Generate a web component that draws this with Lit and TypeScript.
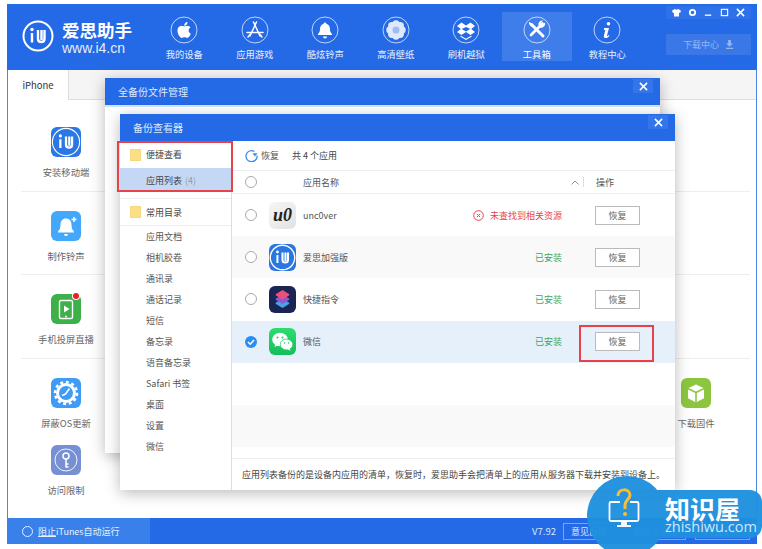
import { LitElement, html, css } from "lit";
import { customElement } from "lit/decorators.js";

const navIcons: Record<string, unknown> = {
  apple: html`<svg viewBox="0 0 28 28"><circle class="ring" cx="14" cy="14" r="13"/><path fill="#fff" transform="translate(3.6 3.4) scale(.88)" d="M17.05 20.28c-.98.95-2.05.8-3.08.35-1.09-.46-2.09-.48-3.24 0-1.44.62-2.2.44-3.06-.35C2.79 15.25 3.51 7.59 9.05 7.31c1.35.07 2.29.74 3.08.8 1.18-.24 2.31-.93 3.57-.84 1.51.12 2.65.72 3.4 1.8-3.12 1.87-2.38 5.98.48 7.13-.57 1.5-1.31 2.99-2.54 4.09zM12.03 7.25c-.15-2.23 1.66-4.07 3.74-4.25.29 2.58-2.34 4.5-3.74 4.25z"/></svg>`,
  store: html`<svg viewBox="0 0 28 28"><circle class="ring" cx="14" cy="14" r="13"/><path d="M15.5 6 9 20M12.5 6 19 20M6 16.5h16M7 21l2-2.500M21 21l-2-2.500" fill="none" stroke="#fff" stroke-width="1.500" stroke-linecap="round"/></svg>`,
  bell: html`<svg viewBox="0 0 28 28"><circle class="ring" cx="14" cy="14" r="13"/><path fill="#fff" d="M14 6.500a1.300 1.300 0 0 1 1.300 1.300c2.500.7 3.700 2.800 3.700 5.200 0 2.500.8 3.700 2 5v1H7v-1c1.200-1.300 2-2.500 2-5 0-2.400 1.200-4.500 3.700-5.200A1.300 1.300 0 0 1 14 6.500zM12 20.500h4a2 2 0 0 1-4 0z"/></svg>`,
  flower: html`<svg viewBox="0 0 28 28"><circle class="ring" cx="14" cy="14" r="13"/><g fill="#dfe9fb"><circle cx="14" cy="8" r="3.700"/><circle cx="14" cy="20" r="3.700"/><circle cx="8" cy="14" r="3.700"/><circle cx="20" cy="14" r="3.700"/><circle cx="9.800" cy="9.800" r="3.700"/><circle cx="18.200" cy="9.800" r="3.700"/><circle cx="9.800" cy="18.200" r="3.700"/><circle cx="18.200" cy="18.200" r="3.700"/></g><circle cx="14" cy="14" r="3.500" fill="#9dbdf3"/></svg>`,
  box: html`<svg viewBox="0 0 28 28"><circle class="ring" cx="14" cy="14" r="13"/><path fill="#fff" d="M9.500 6.500 14 9.500l4.500-3L23 10l-3.800 3 3.800 3-4.500 3-4.500-3-4.500 3L5 16l3.800-3L5 10zM14 11l-4.300 2 4.300 2.500 4.300-2.500zM8.500 19.500l5.500 3.200 5.500-3.200v1.300L14 24l-5.500-3.200z"/></svg>`,
  tools: html`<svg viewBox="0 0 28 28"><circle class="ring" cx="14" cy="14" r="13"/><path d="M8.500 8.500 20 20" stroke="#fff" stroke-width="3" stroke-linecap="round"/><path d="M19.500 7.500 8 19" stroke="#fff" stroke-width="2.600" stroke-linecap="round"/><path fill="#fff" d="M22 6.500a4 4 0 0 1-5 5l-1.500-2a4 4 0 0 1 4.500-5l-2 2.300 1.500 1.500zM6 6l3.500 1.500.5 2.500-2 .5L6 8z"/></svg>`,
  info: html`<svg viewBox="0 0 28 28"><circle class="ring" cx="14" cy="14" r="13"/><circle cx="15.500" cy="7.800" r="1.800" fill="#fff"/><path fill="#fff" d="M11 12h5l-2 7.500c-.2.800.5 1 1.800-.4l.7.600c-1.400 1.800-2.800 2.500-4.200 2.300-1.400-.2-1.700-1.100-1.400-2.300l1.500-5.700H11z"/></svg>`,
};

const nav = [
  ["我的设备", "apple"],
  ["应用游戏", "store"],
  ["酷炫铃声", "bell"],
  ["高清壁纸", "flower"],
  ["刷机越狱", "box"],
  ["工具箱", "tools"],
  ["教程中心", "info"],
];

const logoMark = (c: string, sw = 2) => html`<svg viewBox="0 0 32 32"><circle cx="16" cy="16" r="14.500" fill="none" stroke=${c} stroke-width=${sw}/><path d="M10 13v9.500M16 10v9c0 4 6.500 4 6.500 0v-9M19.500 10v10" fill="none" stroke=${c} stroke-width="2.400"/><circle cx="10" cy="9.500" r="1.700" fill=${c}/></svg>`;

const toolIcons: Record<string, unknown> = {
  i4: html`<div class="ti" style="background:#2b78e4">${logoMark("#fff", 1.2)}</div>`,
  bell: html`<div class="ti" style="background:#43a7fb"><svg viewBox="0 0 30 30"><path fill="#fff" d="M15 7.500c3.600 0 5.500 2.700 5.500 6 0 4 1 5.500 2.500 7v1H7v-1c1.500-1.500 2.500-3 2.500-7 0-3.300 1.900-6 5.500-6zM13 23h4a2 2 0 0 1-4 0z"/><path d="M23 6v5M20.500 8.500h5" stroke="#fff" stroke-width="1.500"/></svg></div>`,
  cast: html`<div class="ti" style="background:#3eb049"><svg viewBox="0 0 30 30"><rect x="8.500" y="6.500" width="13" height="18" rx="1.500" fill="none" stroke="#fff" stroke-width="1.400"/><path d="m13 11.500 5.500 3.500-5.500 3.500z" fill="#fff"/><circle cx="15" cy="22.500" r=".9" fill="#fff"/></svg></div><span class="dot"></span>`,
  gear: html`<div class="ti" style="background:#3f9bf5"><svg viewBox="0 0 30 30"><circle cx="15" cy="15" r="8.500" fill="none" stroke="#fff" stroke-width="3"/><circle cx="15" cy="15" r="11" fill="none" stroke="#fff" stroke-width="2.500" stroke-dasharray="3 2.700"/><path d="M18.500 10.500 14.500 16l-3.500 1.500" fill="none" stroke="#fff" stroke-width="1.600"/></svg></div>`,
  key: html`<div class="ti" style="background:#7690d3"><svg viewBox="0 0 30 30"><circle cx="15" cy="15" r="11" fill="none" stroke="#fff" stroke-width=".9"/><circle cx="15" cy="11" r="3" fill="none" stroke="#fff" stroke-width="1.500"/><path d="M15 14v8.500M15 19h2.500M15 22h2.500" stroke="#fff" stroke-width="1.500" fill="none"/></svg></div>`,
  cube: html`<div class="ti" style="background:#8cc63f"><svg viewBox="0 0 30 30"><path fill="#fff" d="M15 6.500 22.500 10 15 13.500 7.500 10zM7 11.500l7.200 3.400V24L7 20.300zM23 11.500l-7.200 3.400V24l7.200-3.700z"/></svg></div>`,
};

const toolRows = [
  [["安装移动端", "i4", 1]],
  [["制作铃声", "bell", 1]],
  [["手机投屏直播", "cast", 1]],
  [["屏蔽OS更新", "gear", 1], ["下载固件", "cube", 8]],
  [["访问限制", "key", 1]],
];

const appIcons: Record<string, unknown> = {
  unc: html`<div class="ai unc"><span>u0</span></div>`,
  i4: html`<div class="ai" style="background:#2a76e2">${logoMark("#fff", 1.6)}</div>`,
  sc: html`<div class="ai" style="background:#1b2554"><svg viewBox="0 0 27 27"><path d="m13.500 13 6.500 3.500a1 1 0 0 1 0 1.500l-6.500 4-6.500-4a1 1 0 0 1 0-1.500z" fill="#4aa3e8"/><path d="m13.500 8.500 6.500 4a1 1 0 0 1 0 1.500l-6.500 4-6.500-4a1 1 0 0 1 0-1.500z" fill="#8a5bd0"/><path d="m13.500 4 6.500 4a1 1 0 0 1 0 1.500l-6.500 4-6.500-4a1 1 0 0 1 0-1.500z" fill="#ee4f7a"/></svg></div>`,
  wx: html`<div class="ai" style="background:linear-gradient(#2fdc70,#12bf5a)"><svg viewBox="0 0 27 27"><ellipse cx="11" cy="11.500" rx="7.800" ry="6.700" fill="#fff"/><path d="m6.500 16-1 3 3.500-1.800z" fill="#fff"/><ellipse cx="17.500" cy="16.500" rx="6.300" ry="5.400" fill="#fff" stroke="#1fcf66" stroke-width=".8"/><path d="m20.500 20.500 1.300 2.300-3.300-1.500z" fill="#fff"/><circle cx="8.500" cy="9.500" r="1" fill="#1fcf66"/><circle cx="13.500" cy="9.500" r="1" fill="#1fcf66"/><circle cx="15.500" cy="15" r=".8" fill="#1fcf66"/><circle cx="19.500" cy="15" r=".8" fill="#1fcf66"/></svg></div>`,
};

const apps = [
  { name: "unc0ver", icon: "unc", ok: false, sel: false },
  { name: "爱思加强版", icon: "i4", ok: true, sel: false },
  { name: "快捷指令", icon: "sc", ok: true, sel: false },
  { name: "微信", icon: "wx", ok: true, sel: true },
];

const folder = html`<span class="folder"></span>`;
const dirs = ["应用文档", "相机胶卷", "通讯录", "通话记录", "短信", "备忘录", "语音备忘录", "Safari 书签", "桌面", "设置", "微信"];
const close = html`<svg viewBox="0 0 10 10" width="9" height="9"><path d="m1 1 8 8M9 1 1 9" stroke="#fff" stroke-width="1.700"/></svg>`;

@customElement("app-root")
export class AppRoot extends LitElement {
  static styles = css`
    :host {
      display: block;
      position: relative;
      width: 762px;
      height: 549px;
      overflow: hidden;
      background: #fff;
      font-family: "Noto Sans CJK SC", "Noto Sans", sans-serif;
      font-size: 9px;
      color: #555;
    }
    * { box-sizing: border-box; }
    .win {
      position: absolute;
      left: 7px; top: 4px;
      width: 750px; height: 540px;
      display: flex; flex-direction: column;
      border-left: 1px solid #4d86e6;
      border-right: 1px solid #4d86e6;
    }
    .top {
      height: 66px; flex: none;
      margin: 0 -1px;
      background: #2469e6;
      display: flex;
      position: relative;
      color: #fff;
    }
    .logo { width: 142px; flex: none; display: flex; padding: 16px 0 0 15px; gap: 8px; }
    .logo svg { width: 32px; height: 32px; }
    .logo b { display: block; font-size: 17.500px; line-height: 20px; font-weight: 700; margin-top: 0; }
    .logo i { display: block; font: 14px/14px "Liberation Sans", sans-serif; margin-top: 1px; color: #e4edfc; }
    .nav { display: flex; margin-top: 8px; height: 49px; }
    .nav div { width: 70.500px; display: flex; flex-direction: column; align-items: center; padding-top: 4px; font-size: 9.300px; color: #e8f0fd; }
    .nav div.on { background: #3f7dea; color: #fff; }
    .nav svg { width: 28px; height: 28px; margin-bottom: 3px; display: block; }
    .ring { fill: none; stroke: #cfdefa; stroke-width: .9; }
    .ctl {
      position: absolute; left: 659px; top: 2px;
      width: 85px; height: 13px;
      background: #2f71e8;
      display: flex; align-items: center; justify-content: space-around;
      padding: 0 3px;
    }
    .ctl svg { width: 9px; height: 9px; display: block; }
    .dl {
      position: absolute; left: 659px; top: 30px;
      width: 85px; height: 21px;
      background: #3a78e8;
      color: #94b6f2;
      display: flex; align-items: center; justify-content: center; gap: 6px;
      font-size: 9px;
    }
    .dl svg { width: 9px; height: 9px; }
    .tabs { height: 30px; flex: none; background: #f5f5f5; border-bottom: 1px solid #ddd; display: flex; }
    .tab { width: 61px; height: 30px; background: #fff; border-right: 1px solid #ddd; display: flex; align-items: center; justify-content: center; color: #333; font-size: 9.500px; }
    .main { flex: 1; padding: 8px 6px 0 13px; background: #fff; }
    .row { display: grid; grid-template-columns: repeat(8, 90px); height: 83.500px; border-bottom: 1px solid #eee; }
    .row.low { height: 67px; border-bottom: 0; }
    .cell { display: flex; flex-direction: column; align-items: center; padding-top: 19px; color: #666; position: relative; font-size: 9.300px; }
    .ti { width: 30px; height: 30px; border-radius: 6px; margin-bottom: 8px; display: flex; }
    .ti svg { width: 30px; height: 30px; }
    .dot { position: absolute; width: 6px; height: 6px; border-radius: 50%; background: #ee1c25; left: 52px; top: 18px; box-shadow: 0 0 0 1px #fff; order: -1; }
    .status { height: 26px; flex: none; margin: 0 -1px; background: #2469e6; display: flex; align-items: center; color: #fff; }
    .st-left { width: 143px; height: 26px; background: #3a80ea; display: flex; align-items: center; gap: 5px; padding-left: 15px; color: #e8f0fd; }
    .st-left span { width: 11px; height: 11px; border: 1px solid #e8f0fd; border-radius: 50%; }
    .st-left u { text-underline-offset: 1px; }
    .st-right { margin-left: auto; display: flex; align-items: center; padding-right: 7px; color: #dbe7fb; }
    .st-right em { font-style: normal; margin-right: 7px; font-size: 9.500px; }
    .st-right a { height: 17px; border: 1px solid #7da6ee; display: flex; align-items: center; justify-content: center; }
    .modal {
      position: absolute; width: 555px; background: #fff;
      box-shadow: 0 3px 14px rgba(0,0,0,.28);
    }
    .m1 { left: 105px; top: 78px; height: 375px; }
    .m2 { left: 120px; top: 114px; height: 376px; display: flex; flex-direction: column; }
    .mh { height: 27px; flex: none; background: #2469e6; color: #dfe9fb; font-size: 10px; display: flex; align-items: center; padding-left: 13px; position: relative; }
    .x { position: absolute; right: 7px; top: 1px; width: 20px; height: 14px; background: #3475e9; display: flex; align-items: center; justify-content: center; }
    .m1 .mh + div { height: 2px; background: #cfe6fa; }
    .mb { flex: 1; display: flex; min-height: 0; }
    .side { width: 112px; flex: none; border-right: 1px solid #ddd; display: flex; flex-direction: column; color: #555; }
    .sh { height: 27px; display: flex; align-items: center; gap: 5px; padding-left: 10px; color: #444; }
    .sa { height: 24px; background: #c4d8f6; padding-left: 26px; display: flex; align-items: center; color: #444; }
    .sa span { color: #999; margin-left: 3px; }
    .folder { width: 11px; height: 12px; background: #fbdf85; border: 1px solid #f5d884; }
    .sh2 { border-top: 1px solid #eee; border-bottom: 1px solid #eee; margin-top: 6px; height: 28px; }
    .si { height: 21px; display: flex; align-items: center; padding-left: 26px; }
    .con { flex: 1; display: flex; flex-direction: column; min-width: 0; }
    .bar { height: 30px; flex: none; border-bottom: 1px solid #eee; display: flex; align-items: center; padding-left: 13px; }
    .bar svg { width: 13px; height: 13px; margin-right: 3px; }
    .bar b { font-weight: 400; color: #444; margin-left: 13px; }
    .head { height: 23px; flex: none; border-bottom: 1px solid #eee; display: flex; align-items: center; padding-left: 13px; position: relative; }
    .head .name { margin-left: 46px; flex: 1; }
    .head svg { width: 8px; height: 5px; margin-right: 4px; }
    .head s { width: 1px; height: 10px; background: #ddd; margin-right: 12px; }
    .head .op { width: 44px; margin-right: 35px; }
    .radio { width: 12px; height: 12px; flex: none; border: 1px solid #aaa; border-radius: 50%; background: #fff; }
    .radio.sel { border: 0; background: #2c8df0; display: flex; align-items: center; justify-content: center; }
    .radio.sel svg { width: 8px; height: 8px; }
    .rows { flex: 1; }
    .r { height: 42.200px; display: flex; align-items: center; padding-left: 13px; }
    .r.alt { background: #f9f9f9; }
    .r.sel { background: #e6f0fb; }
    .ai { width: 27px; height: 27px; border-radius: 6px; margin-left: 12px; flex: none; overflow: hidden; display: flex; }
    .ai svg { width: 27px; height: 27px; }
    .unc { background: linear-gradient(135deg, #f6f6f6, #e2e2e2); align-items: center; justify-content: center; }
    .unc span { font: italic 700 18px "Liberation Serif", serif; color: #222; }
    .r .nm { margin-left: 7px; flex: 1; }
    .ok { color: #3aa860; }
    .no { color: #e8414a; display: flex; align-items: center; gap: 6px; }
    .no svg { width: 11px; height: 11px; }
    .btn { width: 45px; height: 19px; margin: 0 35px 0 33px; background: #fff; border: 1px solid #bbb; display: flex; align-items: center; justify-content: center; color: #666; }
    .foot { height: 32px; flex: none; border-top: 1px solid #eee; display: flex; align-items: center; padding-left: 10px; color: #444; white-space: nowrap; }
    .mark { position: absolute; border: 2px solid #e8414a; pointer-events: none; }
    .mk1 { left: 117px; top: 141px; width: 116px; height: 51px; }
    .mk2 { left: 579px; top: 325px; width: 75px; height: 37px; }
    .wm { position: absolute; left: 587px; top: 476px; width: 175px; height: 73px; color: #fff; opacity: .96; }
    .wm .c { position: absolute; left: 0; top: 0; width: 80px; height: 80px; border-radius: 50%; background: #1f90df; }
    .wm .b { position: absolute; left: 50px; top: 14px; width: 125px; height: 48px; border-radius: 12px; background: #1f90df; }
    .wm svg { position: absolute; left: 21px; top: 12px; width: 32px; height: 42px; }
    .wm b { position: absolute; left: 78px; top: 17px; font-size: 25px; line-height: 30px; font-weight: 700; white-space: nowrap; }
    .wm i { position: absolute; left: 78px; top: 43px; font: 14.500px/16px "Open Sans", sans-serif; white-space: nowrap; color: #d5ecfb; }
  `;

  render() {
    return html`
      <div class="win">
        <div class="top">
          <div class="logo">
            ${logoMark("#fff")}
            <div><b>爱思助手</b><i>www.i4.cn</i></div>
          </div>
          <div class="nav">
            ${nav.map(([t, k]) => html`<div class=${t === "工具箱" ? "on" : ""}>${navIcons[k]}${t}</div>`)}
          </div>
          <div class="ctl">
            <svg viewBox="0 0 10 10"><path fill="#fff" d="M3 1 0 3l1 2.500 1.200-.5V9.500h5.600V5l1.200.5L10 3 7 1 5 2z"/></svg>
            <svg viewBox="0 0 10 10"><circle cx="5" cy="5" r="3" fill="none" stroke="#fff" stroke-width="2"/></svg>
            <svg viewBox="0 0 10 10"><path d="M1 8h7" stroke="#fff" stroke-width="1.500"/></svg>
            <svg viewBox="0 0 10 10"><rect x="1.500" y="1.500" width="7" height="7" fill="none" stroke="#fff" stroke-width="1.200"/></svg>
            <svg viewBox="0 0 10 10"><path d="m1 1 8 8M9 1 1 9" stroke="#fff" stroke-width="1.700"/></svg>
          </div>
          <div class="dl">下载中心
            <svg viewBox="0 0 10 10"><path fill="#94b6f2" d="M3.500 0h3v4H9L5 7.500 1 4h2.500zM1 8.500h8V10H1z"/></svg>
          </div>
        </div>
        <div class="tabs"><div class="tab">iPhone</div></div>
        <div class="main">
          ${toolRows.map((cells, i) => html`<div class="row ${i >= 3 ? "low" : ""}">
            ${cells.map(([t, k, c]) => html`<div class="cell" style="grid-column:${c}">${toolIcons[k as string]}${t}</div>`)}
          </div>`)}
        </div>
        <div class="status">
          <div class="st-left"><span></span><div><u>阻止</u>iTunes自动运行</div></div>
          <div class="st-right">
            <em>V7.92</em>
            <a style="width:52px;margin-right:10px">意见反馈</a>
            <a style="width:61px;margin-right:9px">微信公众号</a>
            <a style="width:55px">检查更新</a>
          </div>
        </div>
      </div>

      <div class="modal m1">
        <div class="mh">全备份文件管理<span class="x">${close}</span></div>
        <div></div>
      </div>

      <div class="modal m2">
        <div class="mh">备份查看器<span class="x">${close}</span></div>
        <div class="mb">
          <div class="side">
            <div class="sh">${folder}便捷查看</div>
            <div class="sa">应用列表<span>(4)</span></div>
            <div class="sh sh2">${folder}常用目录</div>
            ${dirs.map((d) => html`<div class="si">${d}</div>`)}
          </div>
          <div class="con">
            <div class="bar">
              <svg viewBox="0 0 14 14"><path d="M10 2.500A6 6 0 1 0 13 7" fill="none" stroke="#3b8ee8" stroke-width="1.400"/><path d="M8 4.500h5.500L10.700 8z" fill="#3b8ee8"/></svg>
              恢复<b>共 4 个应用</b>
            </div>
            <div class="head">
              <span class="radio"></span>
              <span class="name">应用名称</span>
              <svg viewBox="0 0 8 5"><path d="M.5 4.500 4 1l3.500 3.500" fill="none" stroke="#999"/></svg>
              <s></s>
              <span class="op">操作</span>
            </div>
            <div class="rows">
              ${apps.map((a, i) => html`<div class="r ${a.sel ? "sel" : i % 2 ? "alt" : ""}">
                ${a.sel
                  ? html`<span class="radio sel"><svg viewBox="0 0 8 8"><path d="m1 4 2.200 2.200L7 2" fill="none" stroke="#fff" stroke-width="1.500"/></svg></span>`
                  : html`<span class="radio"></span>`}
                ${appIcons[a.icon]}
                <span class="nm">${a.name}</span>
                ${a.ok
                  ? html`<span class="ok">已安装</span>`
                  : html`<span class="no"><svg viewBox="0 0 11 11"><circle cx="5.500" cy="5.500" r="4.800" fill="none" stroke="#e8414a"/><path d="m3.800 3.800 3.400 3.400M7.200 3.800 3.800 7.200" stroke="#e8414a"/></svg>未查找到相关资源</span>`}
                <span class="btn">恢复</span>
              </div>`)}
              <div class="r"></div>
              <div class="r alt"></div>
            </div>
            <div class="foot">应用列表备份的是设备内应用的清单，恢复时，爱思助手会把清单上的应用从服务器下载并安装到设备上。</div>
          </div>
        </div>
      </div>

      <div class="mark mk1"></div>
      <div class="mark mk2"></div>

      <div class="wm">
        <div class="c"></div>
        <div class="b"></div>
        <svg viewBox="0 0 32 42">
          <path d="M12 14H3a1.500 1.500 0 0 0-1.500 1.500v16A1.500 1.500 0 0 0 3 33h26a1.500 1.500 0 0 0 1.500-1.500v-16A1.500 1.500 0 0 0 29 14h-7" fill="none" stroke="#fff" stroke-width="1.800"/>
          <path d="M13 33h6v4h4v2H9v-2h4z" fill="#fff"/>
          <path d="M10 8c0-8 12-8 12-1 0 4-5 5-5 10v4" fill="none" stroke="#f9bc2c" stroke-width="3"/>
          <circle cx="17" cy="26" r="2" fill="#f9bc2c"/>
        </svg>
        <b>知识屋</b>
        <i>zhishiwu.com</i>
      </div>
    `;
  }
}
